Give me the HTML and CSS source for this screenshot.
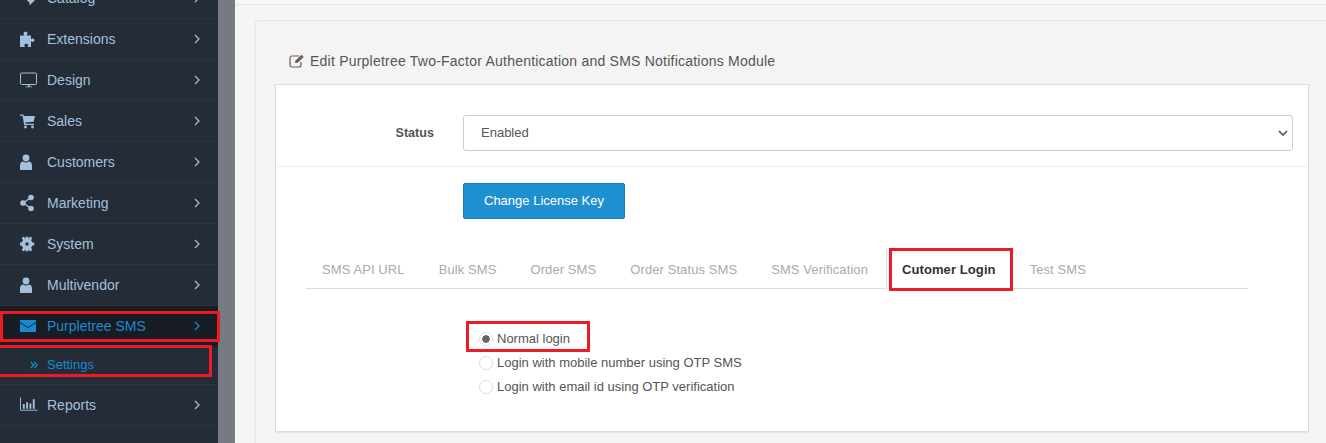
FILE: index.html
```html
<!DOCTYPE html>
<html lang="en">
<head>
<meta charset="utf-8">
<title>Purpletree SMS</title>
<link rel="stylesheet" href="styles.css">
</head>
<body>
<div class="page">
  <aside class="sidebar">
    <ul class="menu">
      <li class="item"><svg class="icon" viewBox="0 0 18 18"><path d="M1 7 8 1h6l3 3v5l-7 7-1-1 1-1-8-7z" fill="currentColor"/></svg><span class="label">Catalog</span><svg class="chev" viewBox="0 0 6 10"><path d="M1 1l4 4-4 4" /></svg></li>
      <li class="item"><svg class="icon" viewBox="0 0 18 18"><path d="M0 5.500h4.500c-1-1-1.200-1.800-.8-2.800C4.200 1.400 7 1.400 7.400 2.800c.3 1-.1 1.800-.9 2.700H11v4c.9-.8 1.700-1.100 2.500-.8 1.200.5 1.200 2.600 0 3.100-.8.300-1.600 0-2.500-.8V17H7.500c.7-.9 1-1.700.5-2.500-.7-1-2.700-1-3.400 0-.5.800-.2 1.600.5 2.500H0z" fill="currentColor"/></svg><span class="label">Extensions</span><svg class="chev" viewBox="0 0 6 10"><path d="M1 1l4 4-4 4" /></svg></li>
      <li class="item"><svg class="icon" viewBox="0 0 18 18"><path d="M1.500 2h14a1 1 0 0 1 1 1v9.500a1 1 0 0 1-1 1h-14a1 1 0 0 1-1-1V3a1 1 0 0 1 1-1z" fill="none" stroke="currentColor"/><path d="M8 14h1.500v1.500H8zM5.500 15.500h6.500v.8H5.500z" fill="currentColor"/></svg><span class="label">Design</span><svg class="chev" viewBox="0 0 6 10"><path d="M1 1l4 4-4 4" /></svg></li>
      <li class="item"><svg class="icon" viewBox="0 0 18 18"><path d="M0 2.500h3.400l.5 1.500H15l-1.300 5.800-8.500.8.300 1.200H14v1.200H4.200L2.500 3.700H0z" fill="currentColor"/><circle cx="5.500" cy="15" r="1.400" fill="currentColor"/><circle cx="12.500" cy="15" r="1.400" fill="currentColor"/></svg><span class="label">Sales</span><svg class="chev" viewBox="0 0 6 10"><path d="M1 1l4 4-4 4" /></svg></li>
      <li class="item"><svg class="icon" viewBox="0 0 18 18"><circle cx="6" cy="5" r="3.400" fill="currentColor"/><path d="M0 16v-3.500C0 10 1.500 8.500 3 8.500c1.800 1.200 4.200 1.200 6 0 1.500 0 3 1.500 3 4V16c0 .6-.5 1-1 1H1c-.5 0-1-.4-1-1z" fill="currentColor"/></svg><span class="label">Customers</span><svg class="chev" viewBox="0 0 6 10"><path d="M1 1l4 4-4 4" /></svg></li>
      <li class="item"><svg class="icon" viewBox="0 0 18 18"><circle cx="11" cy="3.500" r="2.800" fill="currentColor"/><circle cx="3" cy="9" r="2.800" fill="currentColor"/><circle cx="11" cy="14.500" r="2.800" fill="currentColor"/><path d="M3 9l8-5.500M3 9l8 5.500" stroke="currentColor" stroke-width="1.500" fill="none"/></svg><span class="label">Marketing</span><svg class="chev" viewBox="0 0 6 10"><path d="M1 1l4 4-4 4" /></svg></li>
      <li class="item"><svg class="icon" viewBox="0 0 18 18"><circle cx="7" cy="9" r="3.600" fill="none" stroke="currentColor" stroke-width="3.800"/><path d="M5.500 1.800h3v3h-3zM5.500 13.200h3v3h-3zM-.2 7.500h3v3h-3zM11.200 7.500h3v3h-3z" fill="currentColor"/><path d="M1.600 3.400 3.400 1.600l2.200 1.800-2.200 2.200zM12.400 3.400 10.600 1.600 8.400 3.400l2.200 2.200zM1.600 14.600l1.800 1.800 2.200-1.800-2.200-2.200zM12.400 14.600l-1.800 1.800-2.200-1.800 2.200-2.200z" fill="currentColor"/></svg><span class="label">System</span><svg class="chev" viewBox="0 0 6 10"><path d="M1 1l4 4-4 4" /></svg></li>
      <li class="item"><svg class="icon" viewBox="0 0 18 18"><circle cx="6" cy="5" r="3.400" fill="currentColor"/><path d="M0 16v-3.500C0 10 1.500 8.500 3 8.500c1.800 1.200 4.200 1.200 6 0 1.500 0 3 1.500 3 4V16c0 .6-.5 1-1 1H1c-.5 0-1-.4-1-1z" fill="currentColor"/></svg><span class="label">Multivendor</span><svg class="chev" viewBox="0 0 6 10"><path d="M1 1l4 4-4 4" /></svg></li>
      <li class="item active"><svg class="icon" viewBox="0 0 18 18"><path d="M0 3h16v12H0z" fill="currentColor"/><path d="M0 5.500l8 5 8-5" fill="none" stroke="#181c25"/></svg><span class="label">Purpletree SMS</span><svg class="chev" viewBox="0 0 6 10"><path d="M1 1l4 4-4 4" /></svg><span class="mark mark-parent"></span></li>
      <li class="subitem"><svg class="subicon" viewBox="0 0 8 8"><path d="M.8 1l3 3-3 3M4.200 1l3 3-3 3"/></svg><span class="sublabel">Settings</span><span class="mark mark-settings"></span></li>
      <li class="item"><svg class="icon wide" viewBox="0 0 19 18"><path d="M.500 1v13.500H18.500" fill="none" stroke="currentColor"/><path d="M3 8h2v5H3zM6.500 6h2v7h-2zM10 7.500h2V13h-2zM13.500 3h2v10h-2z" fill="currentColor"/></svg><span class="label">Reports</span><svg class="chev" viewBox="0 0 6 10"><path d="M1 1l4 4-4 4" /></svg></li>
    </ul>
  </aside>
  <div class="strip"></div>
  <main class="content">
    <div class="topbar"></div>
    <section class="panel">
      <h1 class="title"><svg class="edit-icon" viewBox="0 0 16 14"><path d="M12 8v3a2 2 0 0 1-2 2H3a2 2 0 0 1-2-2V4a2 2 0 0 1 2-2h7" fill="none" stroke="#6b5d50" stroke-width="1.200"/><path d="M6 9l.5-2.500L12.500.800l2.200 2.200-6 5.800z" fill="#6b5d50"/></svg>Edit Purpletree Two-Factor Authentication and SMS Notifications Module</h1>
      <div class="box">
        <div class="status-row">
          <label class="status-label" for="status">Status</label>
          <div class="select-wrap">
            <select class="select" id="status"><option>Enabled</option><option>Disabled</option></select>
            <svg class="select-arrow" viewBox="0 0 10 6"><path d="M1 1l4 4 4-4"/></svg>
          </div>
        </div>
        <div class="license-row"><button class="btn" type="button">Change License Key</button></div>
        <ul class="tabs">
          <li class="tab">SMS API URL</li>
          <li class="tab">Bulk SMS</li>
          <li class="tab">Order SMS</li>
          <li class="tab">Order Status SMS</li>
          <li class="tab">SMS Verification</li>
          <li class="tab current">Cutomer Login<span class="mark mark-tab"></span></li>
          <li class="tab">Test SMS</li>
        </ul>
        <div class="radios">
          <div class="radio"><span class="dot on"></span>Normal login<span class="mark mark-radio"></span></div>
          <div class="radio"><span class="dot"></span>Login with mobile number using OTP SMS</div>
          <div class="radio"><span class="dot"></span>Login with email id using OTP verification</div>
        </div>
      </div>
    </section>
  </main>
</div>
</body>
</html>
```
FILE: styles.css
```css
* { box-sizing: border-box; }
html, body { margin: 0; height: 443px; overflow: hidden; }
body { font-family: "Liberation Sans", Arial, sans-serif; font-size: 13px; color: #555; background: #f5f5f5; }
.page { display: flex; height: 443px; overflow: hidden; }

.sidebar { width: 218px; flex: none; background: #232c37; }
.menu { list-style: none; margin: -22px 0 0; padding: 0; }
.item { position: relative; display: flex; align-items: center; height: 41px; padding: 0 18px 0 20px; border-bottom: 1px solid #2a3540; color: #a3c1dc; font-size: 14px; }
.icon { width: 18px; height: 18px; flex: none; margin-right: 9px; }
.label { flex: 1; }
.chev { width: 6px; height: 10px; flex: none; fill: none; stroke: currentColor; stroke-width: 1.200; }
.item.active { background: #181c25; color: #1a8ad0; border-bottom-color: #181c25; }
.subitem { position: relative; display: flex; align-items: center; height: 38px; padding: 0 0 2px 30px; border-bottom: 1px solid #2a3540; color: #1a8ad0; }
.subicon { width: 8px; height: 8px; margin-right: 9px; flex: none; fill: none; stroke: currentColor; stroke-width: 1.200; }
.sublabel { font-size: 13px; }

.mark { position: absolute; border: 3px solid #ed1c24; pointer-events: none; }
.mark-parent { left: 0; top: 5px; width: 220px; height: 31px; }
.mark-settings { left: -4px; top: -2px; width: 216px; height: 32px; }
.mark-tab { left: 2px; top: -1px; width: 124px; height: 43px; }
.mark-radio { left: -13px; top: -5px; width: 124px; height: 31px; }

.strip { width: 17px; flex: none; background: #777a82; }

.content { flex: 1; min-width: 0; display: flex; flex-direction: column; }
.topbar { height: 5px; flex: none; border-bottom: 1px solid #e6e6e6; background: #f7f7f7; }
.panel { flex: 1; margin: 15px 0 0 20px; padding: 0 17px 0 19px; background: #f4f4f4; border: 1px solid #e8e8e8; border-right: 0; border-bottom: 0; border-radius: 3px 0 0 0; }
.title { display: flex; align-items: center; height: 63px; margin: 0; padding: 16px 0 0 14px; font-size: 14px; font-weight: 400; color: #555; letter-spacing: .225px; }
.edit-icon { width: 16px; height: 14px; margin-right: 5px; flex: none; }

.box { height: 348px; background: #fff; border: 1px solid #ddd; box-shadow: 0 1px 1px rgba(0,0,0,.05); }
.status-row { display: flex; align-items: center; height: 82px; padding: 14px 15px 0 0; border-bottom: 1px solid #eee; }
.status-label { width: 158px; flex: none; margin-right: 29px; text-align: right; font-size: 12.600px; font-weight: 700; color: #555; }
.select-wrap { position: relative; flex: 1; height: 36px; }
.select { width: 100%; height: 36px; padding: 0 17px; appearance: none; border: 1px solid #ccc; border-radius: 3px; background: #fff; color: #555; font: 13px "Liberation Sans", Arial, sans-serif; }
.select-arrow { position: absolute; right: 5px; top: 15px; width: 10px; height: 6px; fill: none; stroke: #555; stroke-width: 1.700; pointer-events: none; }
.license-row { padding: 16px 0 0 187px; }
.btn { width: 162px; height: 36px; padding: 0 0 2px; border: 1px solid #1a7fb8; border-radius: 2px; background: #1f90cf; color: #fff; font: 13px "Liberation Sans", Arial, sans-serif; }

.tabs { display: flex; list-style: none; margin: 29px 60px 0 30px; padding: 0; border-bottom: 1px solid #ddd; height: 41px; }
.tab { position: relative; display: flex; align-items: center; height: 41px; padding: 1px 15px 0; margin-right: 2px; border: 1px solid transparent; color: #aaa; font-size: 13px; letter-spacing: .09px; }
.current { margin-bottom: -1px; border-color: #ddd #ddd #fff; background: #fff; color: #333; font-weight: 700; border-radius: 2px 2px 0 0; }

.radios { padding: 37px 0 0 203px; }
.radio { position: relative; display: flex; align-items: center; height: 24px; font-size: 13px; color: #555; }
.dot { width: 14px; height: 14px; margin: 2px 4px 0 0; flex: none; border: 1px solid #ddd; border-radius: 50%; background: #fff; }
.dot.on { background: radial-gradient(circle, #666 0 3.500px, #fff 4px); }
```
